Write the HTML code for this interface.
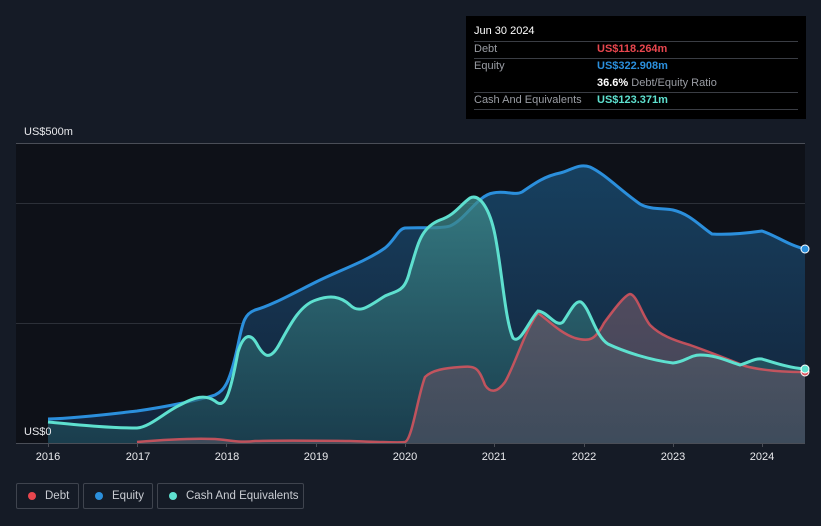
<!DOCTYPE html>
<html><head><meta charset="utf-8"><style>
html,body{margin:0;width:821px;height:526px;overflow:hidden}
body{background:#151b26;font-family:"Liberation Sans",sans-serif;position:relative}
.tip{position:absolute;left:466px;top:16px;width:340px;height:103px;background:#000}
.tip div{position:absolute;font-size:11px;white-space:nowrap}
.ln{position:absolute;left:8px;width:324px;height:1px;background:#3a3d44}
.leg{position:absolute;top:483px;height:26px;border:1px solid #3f444e;border-radius:2px;color:#c9ccd2;font-size:11.5px;line-height:24px;box-sizing:border-box;white-space:nowrap}
.leg i{position:absolute;left:11px;top:8px;width:8px;height:8px;border-radius:50%}
.leg span{position:absolute;left:28px}
.yr{position:absolute;top:451px;color:#e8e9ec;font-size:11px;transform:translateX(-50%)}
</style></head><body>
<svg width="821" height="526" style="position:absolute;left:0;top:0">
<defs>
<linearGradient id="eq" x1="0" y1="0" x2="0" y2="1"><stop offset="0" stop-color="#17405f"/><stop offset="1" stop-color="#13233a"/></linearGradient>
<linearGradient id="ca" x1="0" y1="0" x2="0" y2="1"><stop offset="0" stop-color="#3f8c8c" stop-opacity=".75"/><stop offset="1" stop-color="#1f4f5a" stop-opacity=".6"/></linearGradient>
<linearGradient id="de" x1="0" y1="0" x2="0" y2="1"><stop offset="0" stop-color="#6a5565" stop-opacity=".7"/><stop offset="1" stop-color="#4a5060" stop-opacity=".75"/></linearGradient>
</defs>
<rect x="16" y="143" width="789" height="300" fill="#0e1118"/>
<line x1="16" y1="143.5" x2="805" y2="143.5" stroke="#4a4e57"/>
<line x1="16" y1="203.5" x2="805" y2="203.5" stroke="#2c3038"/>
<line x1="16" y1="323.5" x2="805" y2="323.5" stroke="#2c3038"/>
<path d="M48,419 C80,418 110,414 137,411 C165,407 200,400 215,395 C225,390 230,382 238,345 C243,320 245,314 255,310 C270,306 290,295 316,282 C340,270 365,262 385,248 C395,240 398,229 405,228 C420,227 440,229 450,226 C465,220 478,195 493,193 C505,190 515,196 522,192 C535,183 545,176 560,173 C570,171 578,163 590,167 C605,174 620,190 640,204 C650,210 665,208 673,210 C690,214 700,226 712,234 C730,235 748,233 762,231 C775,235 788,245 805,249 L805,443 L48,443 Z" fill="url(#eq)"/>
<path d="M48,419 C80,418 110,414 137,411 C165,407 200,400 215,395 C225,390 230,382 238,345 C243,320 245,314 255,310 C270,306 290,295 316,282 C340,270 365,262 385,248 C395,240 398,229 405,228 C420,227 440,229 450,226 C465,220 478,195 493,193 C505,190 515,196 522,192 C535,183 545,176 560,173 C570,171 578,163 590,167 C605,174 620,190 640,204 C650,210 665,208 673,210 C690,214 700,226 712,234 C730,235 748,233 762,231 C775,235 788,245 805,249" fill="none" stroke="#2b8fdc" stroke-width="3"/>
<path d="M48,422 C80,425 110,428 137,428 C150,427 165,412 180,405 C195,397 205,394 215,401 C225,410 230,395 238,352 C243,336 250,330 258,346 C264,356 270,362 280,343 C290,325 300,305 316,300 C330,295 340,296 350,305 C360,315 370,305 385,296 C398,290 405,292 410,270 C418,245 420,228 440,220 C455,215 460,205 470,198 C480,193 490,210 495,235 C502,270 505,320 513,338 C520,345 528,322 538,311 C548,312 556,328 563,322 C570,312 575,300 581,302 C590,308 595,336 608,344 C625,352 650,360 673,363 C685,362 690,355 700,355 C715,355 725,360 740,365 C750,362 755,358 762,359 C775,363 790,368 805,369 L805,443 L48,443 Z" fill="url(#ca)"/>
<path d="M137,442 C160,440 190,438 215,439 C230,440 240,443 255,441 C290,440 340,441 350,441 C380,442 400,443 405,442 C412,440 418,395 425,377 C432,370 445,368 460,367 C475,366 478,366 485,385 C490,393 497,393 505,382 C515,365 525,330 538,313 C548,320 560,333 575,338 C590,342 595,340 604,323 C615,308 625,295 630,294 C637,295 642,315 650,325 C660,335 673,340 690,345 C710,352 730,360 745,366 C760,370 780,372 805,372 L805,443 L137,443 Z" fill="url(#de)"/>
<path d="M137,442 C160,440 190,438 215,439 C230,440 240,443 255,441 C290,440 340,441 350,441 C380,442 400,443 405,442 C412,440 418,395 425,377 C432,370 445,368 460,367 C475,366 478,366 485,385 C490,393 497,393 505,382 C515,365 525,330 538,313 C548,320 560,333 575,338 C590,342 595,340 604,323 C615,308 625,295 630,294 C637,295 642,315 650,325 C660,335 673,340 690,345 C710,352 730,360 745,366 C760,370 780,372 805,372" fill="none" stroke="#d9555e" stroke-width="2.5" stroke-opacity=".85"/>
<path d="M48,422 C80,425 110,428 137,428 C150,427 165,412 180,405 C195,397 205,394 215,401 C225,410 230,395 238,352 C243,336 250,330 258,346 C264,356 270,362 280,343 C290,325 300,305 316,300 C330,295 340,296 350,305 C360,315 370,305 385,296 C398,290 405,292 410,270 C418,245 420,228 440,220 C455,215 460,205 470,198 C480,193 490,210 495,235 C502,270 505,320 513,338 C520,345 528,322 538,311 C548,312 556,328 563,322 C570,312 575,300 581,302 C590,308 595,336 608,344 C625,352 650,360 673,363 C685,362 690,355 700,355 C715,355 725,360 740,365 C750,362 755,358 762,359 C775,363 790,368 805,369" fill="none" stroke="#5ee0cf" stroke-width="3"/>
<line x1="16" y1="443.5" x2="805" y2="443.5" stroke="#4a4e57"/>
<g stroke="#4a4e57"><line x1="48.5" y1="443" x2="48.5" y2="447"/><line x1="137.5" y1="443" x2="137.5" y2="447"/><line x1="226.5" y1="443" x2="226.5" y2="447"/><line x1="316.5" y1="443" x2="316.5" y2="447"/><line x1="405.5" y1="443" x2="405.5" y2="447"/><line x1="494.5" y1="443" x2="494.5" y2="447"/><line x1="584.5" y1="443" x2="584.5" y2="447"/><line x1="673.5" y1="443" x2="673.5" y2="447"/><line x1="762.5" y1="443" x2="762.5" y2="447"/></g>
<circle cx="805" cy="372" r="4" fill="#d9555e" stroke="#fff" stroke-width="1"/>
<circle cx="805" cy="369" r="4" fill="#5ee0cf" stroke="#fff" stroke-width="1"/>
<circle cx="805" cy="249" r="4" fill="#2b8fdc" stroke="#fff" stroke-width="1"/>
<text x="24" y="135" fill="#e8e9ec" font-size="11" font-family="Liberation Sans">US$500m</text>
<text x="24" y="435" fill="#e8e9ec" font-size="11" font-family="Liberation Sans">US$0</text>
</svg>
<div class="yr" style="left:48px">2016</div><div class="yr" style="left:138px">2017</div><div class="yr" style="left:227px">2018</div><div class="yr" style="left:316px">2019</div><div class="yr" style="left:405px">2020</div><div class="yr" style="left:494px">2021</div><div class="yr" style="left:584px">2022</div><div class="yr" style="left:673px">2023</div><div class="yr" style="left:762px">2024</div>
<div class="tip">
<div style="left:8px;top:9px;color:#fff">Jun 30 2024</div>
<div class="ln" style="top:25px"></div>
<div style="left:8px;top:27px;color:#9a9da4">Debt</div><div style="left:131px;top:27px;color:#e8464e;font-weight:bold">US$118.264m</div>
<div class="ln" style="top:42px"></div>
<div style="left:8px;top:44px;color:#9a9da4">Equity</div><div style="left:131px;top:44px;color:#2b8fdc;font-weight:bold">US$322.908m</div>
<div style="left:131px;top:61px;color:#9a9da4"><b style="color:#fff">36.6%</b> Debt/Equity Ratio</div>
<div class="ln" style="top:76px"></div>
<div style="left:8px;top:78px;color:#9a9da4">Cash And Equivalents</div><div style="left:131px;top:78px;color:#5ee0cf;font-weight:bold">US$123.371m</div>
<div class="ln" style="top:93px"></div>
</div>
<div class="leg" style="left:16px;width:63px"><i style="background:#e8464e"></i><span>Debt</span></div>
<div class="leg" style="left:83px;width:70px"><i style="background:#2b8fdc"></i><span>Equity</span></div>
<div class="leg" style="left:157px;width:147px"><i style="background:#5ee0cf"></i><span>Cash And Equivalents</span></div>
</body></html>
